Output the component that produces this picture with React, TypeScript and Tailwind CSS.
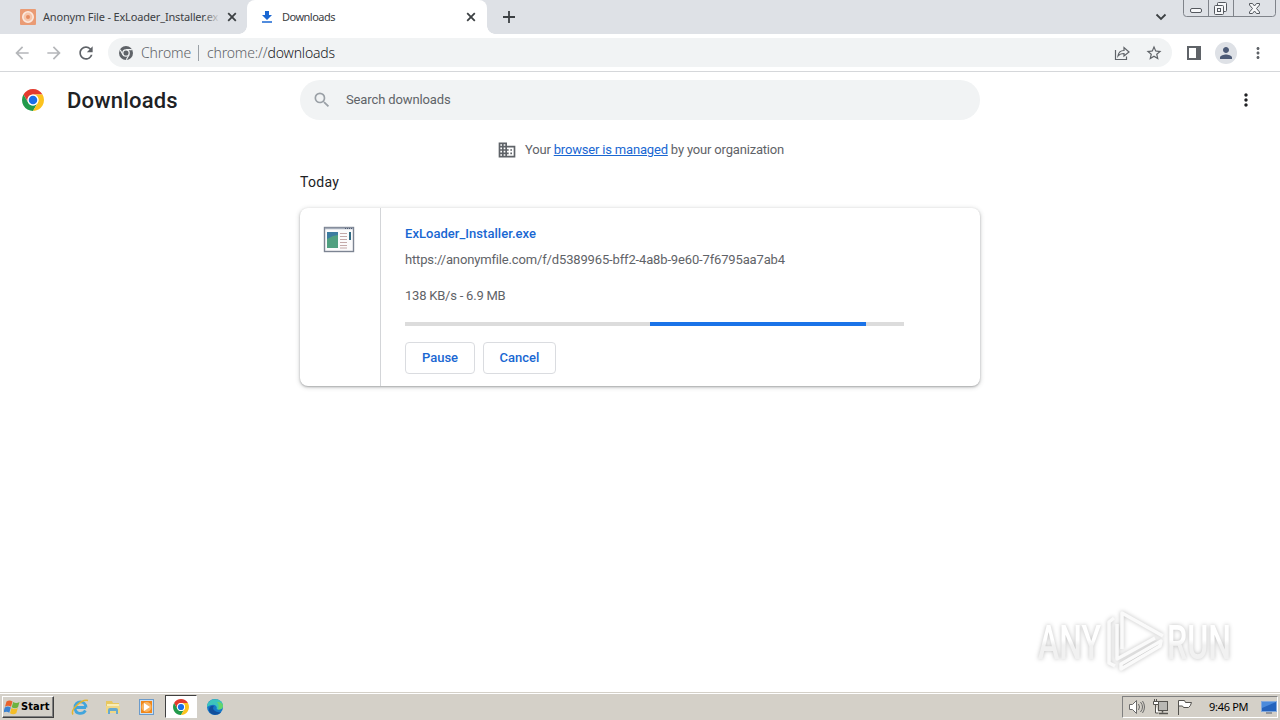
import type { ReactNode } from "react";
import {
  MdArrowBack,
  MdArrowForward,
  MdBusiness,
  MdMoreVert,
  MdPerson,
  MdRefresh,
  MdSearch,
  MdStarOutline,
} from "react-icons/md";

const ChromeLogo = ({ className }: { className: string }) => (
  <svg viewBox="0 0 48 48" className={className}>
    <path d="M24 12H44.78A24 24 0 0 0 3.22 12L13.61 30A12 12 0 0 1 24 12Z" fill="#e33b2e" />
    <path d="M3.22 12L13.61 30A12 12 0 0 0 34.39 30L24 48A24 24 0 0 1 3.22 12Z" fill="#229a4b" />
    <path d="M24 12H44.78A24 24 0 0 1 24 48L34.39 30A12 12 0 0 0 24 12Z" fill="#fcc31e" />
    <circle cx="24" cy="24" r="12" fill="#fff" />
    <circle cx="24" cy="24" r="9.3" fill="#1a6fe8" />
  </svg>
);

const ChromeMono = () => (
  <svg viewBox="0 0 48 48" className="h-[14px] w-[14px]">
    <circle cx="24" cy="24" r="24" fill="#5f6368" />
    <path d="M24 12.5H44M13.6 30L4 13M34.4 30L25 47" stroke="#f1f3f4" strokeWidth="4" />
    <circle cx="24" cy="24" r="11" fill="#5f6368" stroke="#f1f3f4" strokeWidth="4.5" />
  </svg>
);

const CloseIcon = () => (
  <svg viewBox="0 0 14 14" className="h-[14px] w-[14px] shrink-0">
    <path d="M3.200 3.200l7.600 7.600M10.800 3.200l-7.600 7.600" stroke="#3c4043" strokeWidth="1.800" />
  </svg>
);

const TabStrip = () => (
  <div className="flex h-[34px] bg-[#dee1e6] text-[#3c4043]">
    <div className="flex w-[247px] items-center pl-5 pr-2">
      <svg viewBox="0 0 16 16" className="h-4 w-4 shrink-0">
        <rect width="16" height="16" rx="1" fill="#ea9b74" />
        <circle cx="8" cy="8" r="5.2" fill="#f6c5aa" stroke="#fbe9df" strokeWidth="1.6" />
        <circle cx="8" cy="8" r="2" fill="#e58c61" />
      </svg>
      <div className="relative ml-[7px] w-[177px] whitespace-nowrap text-[11px] tracking-[-0.17px]">
        Anonym File - ExLoader_Installer.ex
        <div className="absolute inset-y-0 right-0 w-4 bg-linear-to-r from-transparent to-[#dee1e6]" />
      </div>
      <div className="ml-auto flex">
        <CloseIcon />
      </div>
    </div>
    <div className="relative flex w-[240px] items-center rounded-t-lg bg-white pl-3 pr-[9px]">
      <div className="absolute bottom-0 -left-2 h-2 w-2 bg-[radial-gradient(circle_at_0_0,transparent_7.5px,#fff_8px)]" />
      <div className="absolute bottom-0 -right-2 h-2 w-2 bg-[radial-gradient(circle_at_100%_0,transparent_7.5px,#fff_8px)]" />
      <svg viewBox="0 0 16 16" className="h-4 w-4">
        <path d="M6 2h4v4h3L8 11 3 6h3zM3 12.2h10v1.6H3z" fill="#1a67d2" />
      </svg>
      <span className="ml-[7px] flex-1 text-[11px] tracking-[-0.52px]">Downloads</span>
      <CloseIcon />
    </div>
    <svg viewBox="0 0 12 12" className="ml-4 mt-[11px] h-3 w-3">
      <path d="M6 0v12M0 6h12" stroke="#3c4043" strokeWidth="1.8" />
    </svg>
    <svg viewBox="0 0 12 8" className="ml-auto mr-4 mt-[13px] h-2 w-3">
      <path d="M1.5 1.5L6 6l4.500-4.500" fill="none" stroke="#3c4043" strokeWidth="1.8" />
    </svg>
    <svg viewBox="0 0 93 18" className="mr-1 h-[18px] w-[93px]" fill="none" stroke="#7f838a">
      <path d="M.5 0v13.500q0 3 3 3h86q3 0 3-3V0M25.500 0v16.500M50.500 0v16.500" />
      <g stroke="#54585e" fill="#f6f7f9">
        <rect x="7.500" y="8.500" width="11" height="4" rx="1.500" />
        <rect x="34.500" y="2.500" width="9" height="9" rx="1" />
        <rect x="31.500" y="5.500" width="9" height="9" rx="1" />
        <rect x="34.500" y="8.500" width="3" height="3" />
        <path d="M66.500 3.500h3l2 2.500 2-2.500h3v1.500l-3 3.500 3 3.500v1.500h-3l-2-2.500-2 2.500h-3v-1.500l3-3.500-3-3.500z" />
      </g>
    </svg>
  </div>
);

const Toolbar = () => (
  <div className="flex h-[38px] items-center border-b border-[#d5d7da] pl-3 text-[#5f6368]">
    <MdArrowBack className="h-5 w-5 text-[#b5b7ba]" />
    <MdArrowForward className="ml-3 h-5 w-5 text-[#b5b7ba]" />
    <MdRefresh className="ml-3 h-5 w-5" />
    <div className="ml-3 flex h-[29px] w-[1064px] items-center rounded-full bg-[#f1f3f4] pl-[11px] pr-[9px]">
      <ChromeMono />
      <span className="ml-2 w-[50px] text-[14px] font-light tracking-[-0.12px]">Chrome</span>
      <div className="ml-[7px] h-4 w-px bg-[#9aa0a6]" />
      <span className="ml-2 text-[14px] font-light tracking-[-0.16px]">
        chrome://<span className="text-[#202124]">downloads</span>
      </span>
      <svg viewBox="0 0 16 16" className="ml-auto h-4 w-4" fill="none" stroke="#5f6368" strokeWidth="1.2">
        <path d="M1.500 5v9.500h11V11.500M4 11c.5-4 2.500-5.500 6-5.500V2.500L15 7l-5 4V8.500c-3 0-4.500.5-6 2.500z" />
      </svg>
      <MdStarOutline className="ml-[15px] h-[18px] w-[18px]" />
    </div>
    <svg viewBox="0 0 14 14" className="ml-[15px] h-[14px] w-[14px]">
      <path d="M0 0h14v14H0zM2 2v10h7V2z" fill="#5f6368" fillRule="evenodd" />
    </svg>
    <div className="ml-[14px] flex h-[22px] w-[22px] items-center justify-center rounded-full bg-[#dee1e6]">
      <MdPerson className="h-[18px] w-[18px] text-[#4c5a76]" />
    </div>
    <MdMoreVert className="ml-3 h-[18px] w-[18px]" />
  </div>
);

const AppIcon = () => (
  <svg viewBox="0 0 32 28" className="h-7 w-8">
    <rect x="1.500" y="2.500" width="29" height="24" fill="#fbfbfc" stroke="#7c8492" strokeWidth="1.400" />
    <path d="M2 3.500h28" stroke="#a4acba" strokeWidth="1.500" />
    <path d="M22 3.500h7" stroke="#4e5a72" strokeDasharray="1 1" />
    <rect x="4" y="7" width="11" height="16" fill="#3c7ca0" />
    <path d="M4 14l6-3 5-1v13H4z" fill="#50a080" />
    <path d="M17 8.500h7M17 11.500h7M17 14.500h7M17 17.500h7M17 20.500h7M17 23h7" stroke="#c4a9a9" />
    <path d="M26 7h2v8h-2z" fill="#326b83" />
  </svg>
);

const ActionButton = ({ children, className }: { children: ReactNode; className: string }) => (
  <button className={`h-8 rounded border border-[#dadce0] text-[13px] font-medium text-[#1967d2] ${className}`}>
    {children}
  </button>
);

const DownloadCard = () => (
  <div className="mt-[15px] flex h-[178px] w-[680px] rounded-lg bg-white shadow-[0_1px_2px_rgba(60,64,67,0.35),0_1px_4px_1px_rgba(60,64,67,0.18)]">
    <div className="w-[81px] border-r border-[#d3d5d8] pl-[23px] pt-[17px]">
      <AppIcon />
    </div>
    <div className="pl-6 pt-4 text-[13px] leading-5 text-[#5f6368]">
      <div className="font-medium tracking-[0.04px] text-[#1967d2]">ExLoader_Installer.exe</div>
      <div className="mt-1.5 whitespace-nowrap tracking-[-0.15px]">
        https://anonymfile.com/f/d5389965-bff2-4a8b-9e60-7f6795aa7ab4
      </div>
      <div className="mt-4 tracking-[-0.22px]">138 KB/s - 6.9 MB</div>
      <div className="mt-4 h-1 w-[499px] bg-[#dcdcdc]">
        <div className="ml-[245px] h-1 w-[216px] bg-[#1a73e8]" />
      </div>
      <div className="mt-4 flex gap-2">
        <ActionButton className="w-[70px]">Pause</ActionButton>
        <ActionButton className="w-[73px]">Cancel</ActionButton>
      </div>
    </div>
  </div>
);

const Watermark = () => (
  <svg
    viewBox="0 0 204 70"
    className="absolute right-[42px] bottom-[44px] h-[70px] w-[204px] overflow-visible drop-shadow-[0_0_2px_rgba(0,0,0,0.25)]"
  >
    <defs>
      <linearGradient id="mark" x1="0" y1="0" x2="0" y2="1">
        <stop offset="0.45" stopColor="#fff" />
        <stop offset="0.55" stopColor="#f1f1f1" />
      </linearGradient>
    </defs>
    <g fill="url(#mark)" fontFamily="Roboto" fontSize="49" fontWeight="500">
      <text x="4" y="53" textLength="63" lengthAdjust="spacingAndGlyphs">ANY</text>
      <text x="133" y="53" textLength="64" lengthAdjust="spacingAndGlyphs">RUN</text>
    </g>
    <g fill="none" stroke="#fafafa" strokeWidth="3.500" strokeLinejoin="round">
      <path d="M88 43V7l41 23" />
      <path d="M80 12l-5 4v41l6 3" />
      <path d="M83 18v35l38-21" />
      <path d="M87 63l39-23 1-5-40 23z" />
    </g>
  </svg>
);

const Taskbar = () => (
  <div className="flex h-7 items-center border-t border-[#d4d0c8] bg-[#d4d0c8] shadow-[inset_0_1px_0_#fff]">
    <div className="ml-0.5 mt-px flex h-[22px] w-[52px] items-center border border-t-white border-l-white border-r-[#404040] border-b-[#404040] pl-px shadow-[inset_-1px_-1px_0_#808080]">
      <svg viewBox="0 0 16 16" className="h-4 w-4 shrink-0">
        <path d="M2.500 2.500q3-2 6 0L7 7.700q-3-2-6 0z" fill="#e8622c" />
        <path d="M9.200 3q3 2 6.300 0L14 8.200q-3 2-6.300 0z" fill="#6db33f" />
        <path d="M.8 8.500q3-2 6 0L5.300 13.700q-3-2-6 0z" fill="#3b82d0" />
        <path d="M7.500 9q3 2 6.300 0L12.300 14.200q-3 2-6.300 0z" fill="#f4bd27" />
      </svg>
      <span className="ml-px font-['DejaVu_Sans_Condensed','DejaVu_Sans'] text-[11px] font-bold tracking-[0.1px] text-black">
        Start
      </span>
    </div>
    <svg viewBox="0 0 18 18" className="ml-[17px] h-[18px] w-[18px]" fill="none">
      <path d="M15 9.500H4M15 9.500C14.500 2 4 2 4 9.500s8 7 10.500 3" stroke="#42a5dc" strokeWidth="2.800" />
      <path d="M2 16.500C-1 12 11 .5 17 2.500" stroke="#e5b52d" strokeWidth="1.500" />
    </svg>
    <svg viewBox="0 0 18 18" className="ml-[15px] h-[18px] w-[18px]">
      <path d="M2 3h6l1 2h6v10H2z" fill="#e8c75f" />
      <path d="M3 6h12v3H3z" fill="#f9edb5" />
      <path d="M2 8h14v7H2z" fill="#f0d785" />
      <path d="M4 16v-4q0-2 2-2h6q2 0 2 2v4h-2v-3H6v3z" fill="#67a9cf" />
    </svg>
    <svg viewBox="0 0 18 18" className="ml-4 h-[18px] w-[18px]">
      <rect x="1.500" y="1.500" width="14" height="15" fill="#c9dff3" stroke="#6b9bcb" />
      <rect x="3" y="3" width="11" height="12" fill="#f08719" />
      <circle cx="8.500" cy="9" r="5" fill="#f8b565" />
      <path d="M6 5v8l6-4z" fill="#fff" />
    </svg>
    <div className="ml-[9px] flex h-[23px] w-8 items-center justify-center border border-t-[#404040] border-l-[#404040] border-r-white border-b-white bg-white">
      <ChromeLogo className="h-4 w-4" />
    </div>
    <svg viewBox="0 0 18 18" className="ml-[9px] h-[18px] w-[18px]">
      <circle cx="9" cy="9" r="8" fill="#1677c7" />
      <path d="M1 9C1-1 17-1 17 8c0 4-5 4-6.500 3C12 8 8 4 1 9z" fill="#3cc4bd" />
      <path d="M11 4c4 0 6 2 6 4s-2 4-5 3.500c1-3 1-5-1-7.500z" fill="#64d56d" />
      <path d="M8 8c-2 2-1 6 7 6.500C10 19 3 16 3 12c0-3 2-5 5-4z" fill="#124f9d" />
    </svg>
    <div className="ml-auto mr-0.5 mt-px flex h-[22px] w-[156px] items-center border border-t-[#808080] border-l-[#808080] border-r-white border-b-white">
      <svg viewBox="0 0 18 18" className="ml-[5px] h-[18px] w-[18px]" fill="none" stroke="#6a6a6a">
        <path d="M1.500 6.500h3l4-4v13l-4-4h-3z" fill="#fff" />
        <path d="M10.500 6q2 3 0 6M12.500 4q4 5 0 10M14.500 3q4 6 0 12" />
      </svg>
      <svg viewBox="0 0 18 18" className="ml-[6px] h-[18px] w-[18px]" fill="none" stroke="#55534f">
        <rect x="6.500" y="3.500" width="9" height="9" fill="#b9b8b4" />
        <path d="M10.500 12.500v2M7 15.500h9" strokeWidth="1.500" />
        <path d="M2.500 1v2M4.500 1v2M1.500 3.500h5v3h-5zM3.500 7v8h3" fill="#fff" />
      </svg>
      <svg viewBox="0 0 18 18" className="ml-[6px] h-[18px] w-[18px]" stroke="#55534f" fill="#fff">
        <path d="M2.500 17V2.500h6l1 2h6q-1 4-3 5h-5l-1-1.500h-4" />
      </svg>
      <span className="ml-[15px] w-10 whitespace-nowrap text-[11px] tracking-[-0.3px] text-black">9:46 PM</span>
      <svg viewBox="0 0 16 14" className="ml-auto h-[14px] w-4">
        <rect x=".5" y="1.500" width="15" height="10" fill="#2463bd" stroke="#83a9dc" />
        <path d="M1 2h14L1 8z" fill="#4b8bdc" />
        <path d="M5 13h6" stroke="#4e5a70" />
      </svg>
    </div>
  </div>
);

export default function App() {
  return (
    <div className="relative flex h-[720px] w-[1280px] flex-col overflow-hidden bg-white font-['Noto_Sans',sans-serif]">
      <TabStrip />
      <Toolbar />
      <main className="flex-1 font-['Roboto',sans-serif]">
        <div className="flex h-14 items-center">
          <ChromeLogo className="ml-[22px] h-[22px] w-[22px]" />
          <h1 className="ml-[23px] w-[233px] text-[22px] font-medium tracking-[0.2px] text-[#202124]">Downloads</h1>
          <div className="flex h-10 w-[680px] items-center rounded-full bg-[#f1f3f4] pl-3">
            <MdSearch className="h-5 w-5 text-[#9aa0a6]" />
            <span className="ml-[14px] text-[13px] tracking-[-0.12px] text-[#5f6368]">Search downloads</span>
          </div>
          <MdMoreVert className="ml-auto mr-6 h-5 w-5 text-[#202124]" />
        </div>
        <div className="mx-auto w-[680px]">
          <div className="mt-3 flex h-5 items-center pl-[197px] text-[13px] text-[#5f6368]">
            <MdBusiness className="h-5 w-5" />
            <span className="ml-2 whitespace-nowrap tracking-[-0.18px]">
              Your <a className="text-[#1967d2] underline">browser is managed</a> by your organization
            </span>
          </div>
          <h2 className="mt-3 text-[14px] leading-[21px] tracking-[0.3px] text-[#202124]">Today</h2>
          <DownloadCard />
        </div>
      </main>
      <Watermark />
      <Taskbar />
    </div>
  );
}
